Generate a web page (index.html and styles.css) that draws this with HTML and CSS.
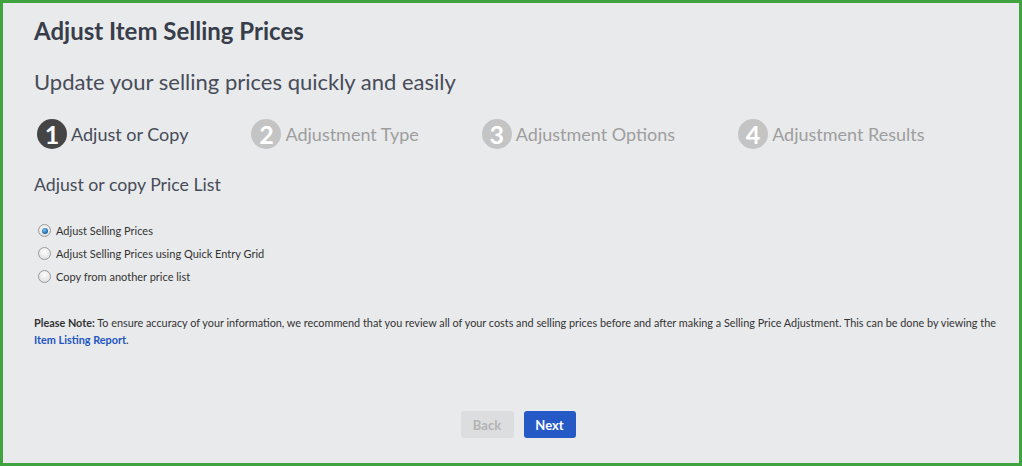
FILE: index.html
```html
<!DOCTYPE html>
<html>
<head>
<meta charset="utf-8">
<link rel="stylesheet" href="styles.css">
</head>
<body>
<div class="frame">
  <h1 class="title">Adjust Item Selling Prices</h1>
  <h2 class="subtitle">Update your selling prices quickly and easily</h2>
  <ol class="steps">
    <li class="step active"><span class="num">1</span><span class="label">Adjust or Copy</span></li>
    <li class="step"><span class="num">2</span><span class="label">Adjustment Type</span></li>
    <li class="step"><span class="num">3</span><span class="label">Adjustment Options</span></li>
    <li class="step"><span class="num">4</span><span class="label">Adjustment Results</span></li>
  </ol>
  <h3 class="section">Adjust or copy Price List</h3>
  <div class="options">
    <label class="opt"><input type="radio" name="m" checked> Adjust Selling Prices</label>
    <label class="opt"><input type="radio" name="m"> Adjust Selling Prices using Quick Entry Grid</label>
    <label class="opt"><input type="radio" name="m"> Copy from another price list</label>
  </div>
  <p class="note"><b>Please Note:</b> To ensure accuracy of your information, we recommend that you review all of your costs and selling prices before and after making a Selling Price Adjustment. This can be done by viewing the <a href="#" class="link">Item Listing Report</a>.</p>
  <div class="actions">
    <button class="btn back" disabled>Back</button>
    <button class="btn next">Next</button>
  </div>
</div>
</body>
</html>
```
FILE: styles.css
```css
* { box-sizing: border-box; }
html, body { margin: 0; padding: 0; }
body { font-family: Lato, "Open Sans", sans-serif; background: #e9eaec; }
.frame {
  width: 1022px;
  height: 466px;
  border: 3px solid #3fa43f;
  background: #e9eaec;
  padding: 14px 18px 0 31px;
  display: flex;
  flex-direction: column;
}
.title {
  margin: 0;
  font-size: 24px;
  font-weight: 700;
  color: #383d4a;
  line-height: 28px;
}
.subtitle {
  margin: 24px 0 0;
  font-size: 22px;
  font-weight: 400;
  color: #474c58;
  line-height: 26px;
}
.steps {
  list-style: none;
  margin: 24px 0 0 3px;
  padding: 0;
  display: flex;
  gap: 63px;
}
.step { display: flex; align-items: center; gap: 4px; color: #9e9e9e; }
.num {
  width: 30px; height: 30px;
  border-radius: 50%;
  background: #c4c4c4;
  color: #fff;
  font-weight: 700;
  font-size: 25px;
  display: flex; align-items: center; justify-content: center;
  line-height: 1;
}
.label { font-size: 18px; line-height: 30px; }
.step.active { color: #474c58; }
.step.active .num { background: #454545; }
.section {
  margin: 25px 0 0;
  font-size: 17.7px;
  font-weight: 400;
  color: #474c58;
  line-height: 22px;
}
.options {
  margin-top: 26px;
  display: flex;
  flex-direction: column;
  gap: 6px;
}
.opt {
  display: flex;
  align-items: center;
  font-size: 11px;
  color: #333;
  height: 17px;
  gap: 5px;
}
.opt input {
  appearance: none;
  -webkit-appearance: none;
  margin: 0 0 0 4px;
  width: 13px; height: 13px;
  border-radius: 50%;
  border: 1px solid #9a9a9a;
  background: radial-gradient(circle at 50% 35%, #fdfdfd 0%, #e4e4e4 70%, #d2d2d2 100%);
  position: relative;
}
.opt input:checked::after {
  content: "";
  position: absolute;
  left: 2.5px; top: 2.5px;
  width: 6px; height: 6px;
  border-radius: 50%;
  background: radial-gradient(circle at 40% 35%, #7fc4f0 0%, #1f6fb0 60%, #12456f 100%);
}
.note {
  margin: 29px 0 0;
  font-size: 10.85px;
  line-height: 17px;
  color: #333;
}
.note b { font-weight: 700; }
.link { color: #2255c4; text-decoration: none; font-weight: 700; }
.actions {
  margin-top: 63px;
  display: flex;
  justify-content: center;
  gap: 10px;
  padding-left: 1px;
}
.btn {
  font-family: Lato, sans-serif;
  font-size: 13px;
  font-weight: 700;
  height: 27px;
  border: none;
  border-radius: 3px;
  padding: 0 8px;
}
.back { background: #dcdddf; color: #b3b3b3; width: 53px; }
.next { background: #2459c6; color: #fff; width: 52px; }
```
